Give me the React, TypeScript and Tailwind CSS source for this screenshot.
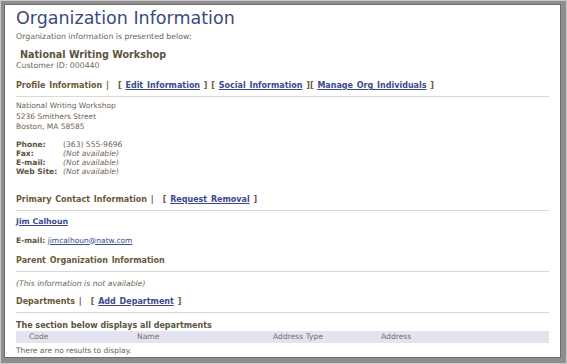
const FONT = { fontFamily: '"DejaVu Sans", Verdana, sans-serif' };

function Link({ children }: { children: React.ReactNode }) {
  return <span className="text-[#3c4a8c] underline underline-offset-1">{children}</span>;
}

function SectionHead({ children }: { children: React.ReactNode }) {
  return (
    <div className="border-b border-[#d8d8d8] pb-[5px] text-[8px] leading-[10px] font-bold text-[#6b5838] whitespace-nowrap [word-spacing:1px]">
      {children}
    </div>
  );
}

export default function App() {
  return (
    <div className="w-[567px] h-[364px] bg-[#c9c9c9] p-[1px]" style={FONT}>
      <div className="h-full border-t-[3px] border-l-[3px] border-r-[5px] border-b-[5px] border-[#8e8e8e] bg-white">
        <div className="h-full border border-[#6e6e6e] px-[11px] pt-[2px]">
          <h1 className="text-[17.5px] leading-[22px] text-[#3b4a80]">Organization Information</h1>
          <p className="mt-[3px] text-[7.8px] leading-[10px] text-[#6f6454]">Organization information is presented below:</p>

          <div className="mt-[7px] pl-[4px] text-[9.6px] leading-[12px] font-bold text-[#5d5340]">National Writing Workshop</div>
          <div className="text-[7.8px] leading-[10px] text-[#6f6454]">Customer ID: 000440</div>

          <div className="mt-[10px]">
            <SectionHead>
              Profile Information |<span className="ml-[9px]">[ <Link>Edit Information</Link> ] [ <Link>Social Information</Link> ][ <Link>Manage Org Individuals</Link> ]</span>
            </SectionHead>
          </div>

          <div className="mt-[4px] text-[7.5px] leading-[10.5px] text-[#6f6454]">
            <div>National Writing Workshop</div>
            <div>5236 Smithers Street</div>
            <div>Boston, MA 58585</div>
          </div>

          <div className="mt-[7px] grid grid-cols-[47px_1fr] text-[7.6px] leading-[9px] text-[#6f6454]">
            <span className="font-bold text-[#5d5340]">Phone:</span>
            <span>(363) 555-9696</span>
            <span className="font-bold text-[#5d5340]">Fax:</span>
            <span className="italic">(Not available)</span>
            <span className="font-bold text-[#5d5340]">E-mail:</span>
            <span className="italic">(Not available)</span>
            <span className="font-bold text-[#5d5340]">Web Site:</span>
            <span className="italic">(Not available)</span>
          </div>

          <div className="mt-[19px]">
            <SectionHead>
              Primary Contact Information |<span className="ml-[9px]">[ <Link>Request Removal</Link> ]</span>
            </SectionHead>
          </div>

          <div className="mt-[6px] text-[7.8px] font-bold leading-[10px]">
            <Link>Jim Calhoun</Link>
          </div>
          <div className="mt-[9px] text-[7.5px] leading-[10px] text-[#6f6454]">
            <span className="font-bold text-[#5d5340]">E-mail:</span> <Link>jimcalhoun@natw.com</Link>
          </div>

          <div className="mt-[10px]">
            <SectionHead>Parent Organization Information</SectionHead>
          </div>
          <div className="mt-[7px] text-[7.7px] leading-[10px] italic text-[#6f6454]">(This information is not available)</div>

          <div className="mt-[8px]">
            <SectionHead>
              Departments |<span className="ml-[9px]">[ <Link>Add Department</Link> ]</span>
            </SectionHead>
          </div>

          <div className="mt-[8px] text-[8px] font-bold leading-[10px] text-[#5d5340]">The section below displays all departments</div>
          <div className="grid grid-cols-[121px_136px_108px_1fr] bg-[#e4e4f0] text-[7.6px] leading-[12px] text-[#746e62]">
            <span className="pl-[13px]">Code</span>
            <span>Name</span>
            <span>Address Type</span>
            <span>Address</span>
          </div>
          <div className="mt-[3px] text-[7.5px] leading-[10px] text-[#6f6454]">There are no results to display.</div>
        </div>
      </div>
    </div>
  );
}
